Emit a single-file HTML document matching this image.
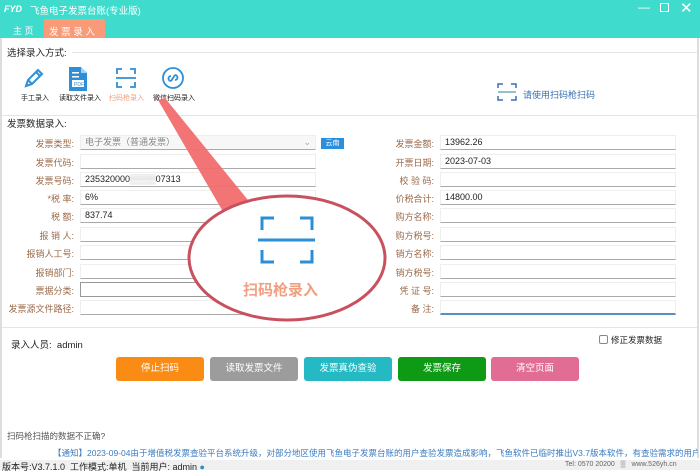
<!DOCTYPE html>
<html><head><meta charset="utf-8">
<style>
*{margin:0;padding:0;box-sizing:border-box}
body{width:700px;height:470px;overflow:hidden;background:#fff;font-family:"Liberation Sans","Noto Sans CJK SC",sans-serif;position:relative;font-size:9px;color:#333}
.a{position:absolute;white-space:nowrap}
.lab{position:absolute;color:#9b6a4a;font-size:9px;text-align:right;white-space:nowrap}
.in{position:absolute;height:15px;background:#fff;border:1px solid #eee;border-bottom:1px solid #aaa;font-size:9px;line-height:13px;padding-left:4px;color:#222}
.btn{position:absolute;top:357px;height:24px;width:88px;border-radius:3px;color:#fff;font-size:9.5px;text-align:center;line-height:24px}
</style></head><body>
<div class="a" style="left:0;top:0;width:700px;height:38px;background:#3fdccd"></div>
<div class="a" style="left:4px;top:4px;color:#fff;font-size:9px;font-style:italic;font-weight:bold">FYD</div>
<div class="a" style="left:30px;top:3px;color:#fff;font-size:9.5px">飞鱼电子发票台账(专业版)</div>
<div class="a" style="left:638px;top:0;color:#fff;font-size:12px">—</div>
<div class="a" style="left:660px;top:3px;width:9px;height:9px;border:1.5px solid #fff"></div>
<div class="a" style="left:680px;top:-1px;color:#fff;font-size:15px">✕</div>
<div class="a" style="left:13px;top:24px;color:#fff;font-size:9px">主 页</div>
<div class="a" style="left:44px;top:19px;width:61px;height:19px;background:#f99a78;color:#fff;font-size:9.5px;padding:5px 0 0 5px">发 票 录 入</div>
<div class="a" style="left:0;top:38px;width:2px;height:420px;background:#ddd"></div>
<div class="a" style="left:697px;top:38px;width:2px;height:420px;background:#ddd"></div>

<div class="a" style="left:7px;top:45px;font-size:9.5px;color:#222">选择录入方式:</div>
<div class="a" style="left:72px;top:52px;width:625px;height:1px;background:#e4e4e4"></div>
<svg class="a" style="left:22px;top:66px" width="24" height="24" viewBox="0 0 24 24"><g fill="none" stroke="#2d8fd8" stroke-width="2"><path d="M4 20l2-6 10-10 4 4-10 10z"/><path d="M6 14l4 4M14 6l4 4"/></g></svg>
<svg class="a" style="left:67px;top:66px" width="22" height="26" viewBox="0 0 22 26"><path d="M2 1h12l6 6v18H2z" fill="#2d8fd8"/><path d="M14 1v6h6" fill="#9fd0f5"/><rect x="5" y="6" width="7" height="1.5" fill="#fff"/><rect x="5" y="10" width="7" height="1.5" fill="#fff"/><rect x="5" y="14" width="12" height="7" fill="#fff"/><text x="7" y="20" font-size="5" fill="#2d8fd8" font-family="Liberation Sans">PDF</text></svg>
<svg class="a" style="left:115px;top:67px" width="22" height="22" viewBox="0 0 22 22"><g fill="none" stroke="#2d8fd8" stroke-width="1.8"><path d="M2 7V2h5M15 2h5v5M2 15v5h5M15 20h5v-5"/><path d="M1 11h20"/></g></svg>
<svg class="a" style="left:161px;top:66px" width="24" height="24" viewBox="0 0 24 24"><g fill="none" stroke="#2d8fd8" stroke-width="1.8"><circle cx="12" cy="12" r="10"/><path d="M10 15a2.5 2.5 0 1 1 0-5M14 9a2.5 2.5 0 1 1 0 5M10 15l4-6"/></g></svg>
<div class="a" style="left:21px;top:93px;font-size:7px;color:#222">手工录入</div>
<div class="a" style="left:59px;top:93px;font-size:7px;color:#222">读取文件录入</div>
<div class="a" style="left:109px;top:93px;font-size:7px;color:#f0a080">扫码枪录入</div>
<div class="a" style="left:153px;top:93px;font-size:7px;color:#222">微信扫码录入</div>
<svg class="a" style="left:497px;top:83px" width="20" height="18" viewBox="0 0 20 18"><g fill="none" stroke="#3a6fb0" stroke-width="1.5"><path d="M1 5V1h5M14 1h5v4M1 13v4h5M14 17h5v-4"/><path d="M1 9h18" stroke="#7ab"/></g></svg>
<div class="a" style="left:523px;top:88px;font-size:9px;color:#3a6fb0">请使用扫码枪扫码</div>
<div class="a" style="left:2px;top:115px;width:695px;height:1px;background:#e4e4e4"></div>
<div class="a" style="left:7px;top:116px;font-size:9.5px;color:#222">发票数据录入:</div>
<div class="a" style="left:2px;top:327px;width:695px;height:1px;background:#e4e4e4"></div>

<div class="lab" style="right:626px;top:137px">发票类型:</div>
<div class="in" style="left:80px;top:135px;width:236px;color:#888;background:#f7f7f7">电子发票（普通发票）<span style="position:absolute;right:4px;color:#aaa">⌄</span></div>
<div class="a" style="left:321px;top:138px;width:23px;height:11px;background:#2b8fe0;color:#fff;font-size:7px;text-align:center;line-height:11px">云南</div>
<div class="lab" style="right:626px;top:156px">发票代码:</div><div class="in" style="left:80px;top:154px;width:236px"></div>
<div class="lab" style="right:626px;top:174px">发票号码:</div><div class="in" style="left:80px;top:172px;width:236px">235320000<span style="color:#bbb">▒▒▒▒</span>07313</div>
<div class="lab" style="right:626px;top:192px">*税 率:</div><div class="in" style="left:80px;top:190px;width:236px">6%<span style="position:absolute;right:4px;color:#aaa">⌄</span></div>
<div class="lab" style="right:626px;top:210px">税 额:</div><div class="in" style="left:80px;top:208px;width:236px">837.74</div>
<div class="lab" style="right:626px;top:229px">报 销 人:</div><div class="in" style="left:80px;top:227px;width:236px"></div>
<div class="lab" style="right:626px;top:247px">报销人工号:</div><div class="in" style="left:80px;top:245px;width:236px"></div>
<div class="lab" style="right:626px;top:266px">报销部门:</div><div class="in" style="left:80px;top:264px;width:236px"></div>
<div class="lab" style="right:626px;top:284px">票据分类:</div><div class="in" style="left:80px;top:282px;width:236px;border:1px solid #999"></div>
<div class="lab" style="right:626px;top:302px">发票源文件路径:</div><div class="in" style="left:80px;top:300px;width:236px"></div>

<div class="lab" style="right:266px;top:137px">发票金额:</div><div class="in" style="left:440px;top:135px;width:236px">13962.26</div>
<div class="lab" style="right:266px;top:156px">开票日期:</div><div class="in" style="left:440px;top:154px;width:236px">2023-07-03</div>
<div class="lab" style="right:266px;top:174px">校 验 码:</div><div class="in" style="left:440px;top:172px;width:236px"></div>
<div class="lab" style="right:266px;top:192px">价税合计:</div><div class="in" style="left:440px;top:190px;width:236px">14800.00</div>
<div class="lab" style="right:266px;top:210px">购方名称:</div><div class="in" style="left:440px;top:208px;width:236px"></div>
<div class="lab" style="right:266px;top:229px">购方税号:</div><div class="in" style="left:440px;top:227px;width:236px"></div>
<div class="lab" style="right:266px;top:247px">销方名称:</div><div class="in" style="left:440px;top:245px;width:236px"></div>
<div class="lab" style="right:266px;top:266px">销方税号:</div><div class="in" style="left:440px;top:264px;width:236px"></div>
<div class="lab" style="right:266px;top:284px">凭 证 号:</div><div class="in" style="left:440px;top:282px;width:236px"></div>
<div class="lab" style="right:266px;top:302px">备 注:</div><div class="in" style="left:440px;top:300px;width:236px;border-bottom:2px solid #5a8fc0"></div>

<svg class="a" style="left:0;top:0" width="700" height="470">
<polygon points="158,100 165,98 252,205 225,215" fill="#f26d6d" opacity="0.95"/>
<ellipse cx="287" cy="258" rx="98" ry="62" fill="#fff" stroke="#c9505e" stroke-width="3"/>
<g fill="none" stroke="#2b8fd6" stroke-width="3"><path d="M262 230v-12h12M300 218h12v12M262 250v12h12M300 262h12v-12"/><path d="M258 240h57"/></g>
<text x="243" y="295" font-size="15" font-weight="bold" fill="#f0a080" font-family="Noto Sans CJK SC">扫码枪录入</text>
</svg>

<div class="a" style="left:11px;top:337px;font-size:9.5px;color:#222">录入人员:&nbsp; admin</div>
<div class="a" style="left:599px;top:335px;width:9px;height:9px;border:1px solid #888;border-radius:2px"></div>
<div class="a" style="left:611px;top:334px;font-size:8.5px;color:#222">修正发票数据</div>
<div class="btn" style="left:116px;background:#fa8c16">停止扫码</div>
<div class="btn" style="left:210px;background:#9c9c9c">读取发票文件</div>
<div class="btn" style="left:304px;background:#25b9c4">发票真伪查验</div>
<div class="btn" style="left:398px;background:#0f9a15">发票保存</div>
<div class="btn" style="left:491px;background:#e26d94">清空页面</div>

<div class="a" style="left:7px;top:430px;font-size:8.5px;color:#555">扫码枪扫描的数据不正确?</div>
<div class="a" style="left:53px;top:447px;width:645px;overflow:hidden;font-size:8.5px;color:#3a7bc0">【通知】2023-09-04由于增值税发票查验平台系统升级，对部分地区使用飞鱼电子发票台账的用户查验发票造成影响，飞鱼软件已临时推出V3.7版本软件，有查验需求的用户请及时更新</div>
<div class="a" style="left:0;top:460px;width:700px;height:10px;background:#f0f0f0"></div>
<div class="a" style="left:2px;top:460px;font-size:9px;color:#222">版本号:V3.7.1.0 &nbsp;工作模式:单机 &nbsp;当前用户: admin <span style="color:#2b8fd6">●</span></div>
<div class="a" style="left:565px;top:461px;font-size:7px;color:#666">Tel: 0570 20200 &nbsp; ▒ &nbsp; www.526yh.cn</div>
</body></html>
